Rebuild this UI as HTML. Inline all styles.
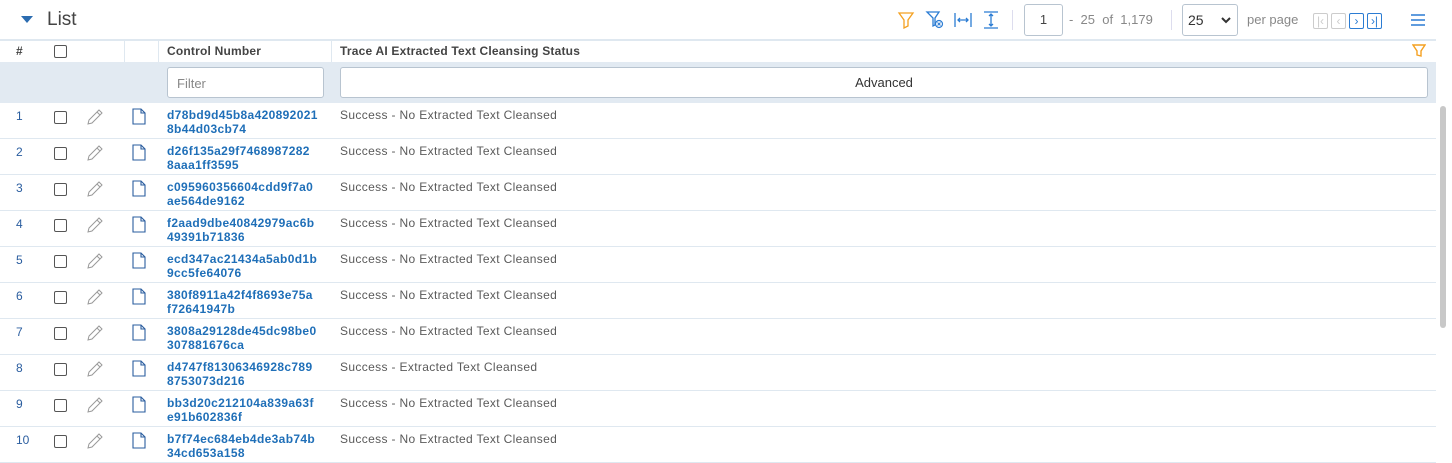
<!DOCTYPE html>
<html><head><meta charset="utf-8"><style>
*{box-sizing:border-box;margin:0;padding:0}
body{width:1452px;height:463px;overflow:hidden;background:#fff;font-family:"Liberation Sans",Arial,sans-serif;position:relative;color:#333}
.abs{position:absolute}
.top{height:41px;border-bottom:2px solid #dfe8f0;width:1436px}
.hdr{top:41px;height:21px;width:1436px;font-size:12px;font-weight:bold;color:#444;letter-spacing:0.2px}
.filt{top:62px;height:41px;width:1436px;background:#e2eaf2}
.row{position:absolute;left:0;width:1436px;height:36px;border-bottom:1px solid #dfe8f0;font-size:12px}
.cb{position:absolute;width:13px;height:13px;border:1px solid #555;border-radius:2px;background:#fff}
.num{position:absolute;left:16px;top:6px;color:#2a5d9f}
.cn{position:absolute;left:167px;top:5px;color:#1f6fb8;font-weight:bold;line-height:14px;font-size:12px;letter-spacing:0.35px}
.st{position:absolute;left:340px;top:5px;color:#5a5a5a;letter-spacing:0.35px}
.vl{position:absolute;top:41px;height:21px;width:1px;background:#dfe8f0}
.pb{position:absolute;top:13px;width:15px;height:16px;border-radius:2px;font-size:12px;text-align:center;line-height:14px}
</style></head><body>
<div class="abs top" style="left:0;top:0">
 <div class="abs" style="left:21px;top:16px;width:0;height:0;border-left:6px solid transparent;border-right:6px solid transparent;border-top:7px solid #2b6cb0"></div>
 <div class="abs" style="left:47px;top:9px;font-size:19px;color:#444">List</div>
 <svg class="abs" style="left:897px;top:11px" width="18" height="18" viewBox="0 0 18 18"><path d="M2 2h14l-5 7v6l-4 2V9z" fill="none" stroke="#f4a020" stroke-width="1.3"/></svg>
 <svg class="abs" style="left:925px;top:10px" width="20" height="20" viewBox="0 0 20 20"><path d="M2 2h12l-4 6v7l-2 1V8z" fill="none" stroke="#2b7cd3" stroke-width="1.3"/><circle cx="14" cy="14" r="3.5" fill="none" stroke="#2b7cd3" stroke-width="1.2"/><path d="M12.5 12.5l3 3M15.5 12.5l-3 3" stroke="#2b7cd3"/></svg>
 <svg class="abs" style="left:953px;top:11px" width="20" height="18" viewBox="0 0 20 18"><path d="M2 2v14M18 2v14M5 9h10M7 7l-2 2 2 2M13 7l2 2-2 2" fill="none" stroke="#2b7cd3" stroke-width="1.3"/></svg>
 <svg class="abs" style="left:981px;top:10px" width="20" height="20" viewBox="0 0 20 20"><path d="M3 2h14M3 18h14M10 4v12M8 6l2-2 2 2M8 14l2 2 2-2" fill="none" stroke="#2b7cd3" stroke-width="1.3"/></svg>
 <div class="abs" style="left:1012px;top:10px;width:1px;height:20px;background:#dde"></div>
 <div class="abs" style="left:1024px;top:4px;width:39px;height:32px;border:1px solid #b8c4d0;border-radius:3px;font-size:13px;color:#444;text-align:center;line-height:30px">1</div>
 <div class="abs" style="left:1069px;top:12px;font-size:13px;color:#888">-&nbsp; 25&nbsp; of&nbsp; 1,179</div>
 <div class="abs" style="left:1171px;top:10px;width:1px;height:20px;background:#dde"></div>
 <div class="abs" style="left:1182px;top:4px;width:56px;height:32px;border:1px solid #b8c4d0;border-radius:3px;font-size:14px;color:#333;line-height:30px;padding-left:5px">25<svg style="position:absolute;right:6px;top:12px" width="10" height="7" viewBox="0 0 10 7"><path d="M1 1l4 4 4-4" fill="none" stroke="#333" stroke-width="2"/></svg></div>
 <div class="abs" style="left:1247px;top:12px;font-size:13px;color:#888">per page</div>
 <div class="pb" style="left:1313px;border:1px solid #ccc;color:#ccc">|‹</div>
 <div class="pb" style="left:1331px;border:1px solid #ccc;color:#ccc">‹</div>
 <div class="pb" style="left:1349px;border:1px solid #2b7cd3;color:#2b7cd3">›</div>
 <div class="pb" style="left:1367px;border:1px solid #2b7cd3;color:#2b7cd3">›|</div>
 <svg class="abs" style="left:1410px;top:13px" width="16" height="14" viewBox="0 0 16 14"><path d="M1 2h14M1 7h14M1 12h14" stroke="#2b7cd3" stroke-width="1.4"/></svg>
</div>
<div class="abs hdr" style="left:0">
 <div class="abs" style="left:16px;top:3px">#</div>
 <div class="cb" style="left:54px;top:4px"></div>
 <div class="abs" style="left:167px;top:3px">Control Number</div>
 <div class="abs" style="left:340px;top:3px">Trace AI Extracted Text Cleansing Status</div>
 <svg class="abs" style="left:1412px;top:3px" width="14" height="14" viewBox="0 0 14 14"><path d="M1 1h12l-4 6v5l-4-1V7z" fill="none" stroke="#f4a020" stroke-width="1.4"/></svg>
</div>
<div class="vl" style="left:124px"></div><div class="vl" style="left:158px"></div><div class="vl" style="left:331px"></div>
<div class="abs filt" style="left:0">
 <div class="abs" style="left:167px;top:5px;width:157px;height:31px;background:#fff;border:1px solid #b8c4d0;border-radius:3px;font-size:13px;color:#888;padding:8px 9px">Filter</div>
 <div class="abs" style="left:340px;top:5px;width:1088px;height:31px;background:#fff;border:1px solid #b8c4d0;border-radius:3px;font-size:13px;color:#333;text-align:center;line-height:29px">Advanced</div>
</div>
<div class="abs" style="left:1440px;top:106px;width:6px;height:222px;background:#c8c8c8;border-radius:3px"></div>
<div id="rows"></div>
<script>
var d=[["d78bd9d45b8a420892021","8b44d03cb74",0],["d26f135a29f7468987282","8aaa1ff3595",0],["c095960356604cdd9f7a0","ae564de9162",0],["f2aad9dbe40842979ac6b","49391b71836",0],["ecd347ac21434a5ab0d1b","9cc5fe64076",0],["380f8911a42f4f8693e75a","f72641947b",0],["3808a29128de45dc98be0","307881676ca",0],["d4747f81306346928c789","8753073d216",1],["bb3d20c212104a839a63f","e91b602836f",0],["b7f74ec684eb4de3ab74b","34cd653a158",0]];
var h="";
d.forEach(function(r,i){var y=103+i*36;
h+='<div class="row" style="top:'+y+'px"><div class="num">'+(i+1)+'</div><div class="cb" style="left:54px;top:8px"></div>'+
'<svg style="position:absolute;left:86px;top:5px" width="18" height="18" viewBox="0 0 18 18"><path d="M2 16l1-4 10-10 3 3-10 10z M11 4l3 3" fill="none" stroke="#999" stroke-width="1"/></svg>'+
'<svg style="position:absolute;left:132px;top:5px" width="14" height="17" viewBox="0 0 14 17"><path d="M1 1h8l4 4v11H1z M9 1v4h4" fill="none" stroke="#2a5d9f" stroke-width="1.1"/></svg>'+
'<div class="cn">'+r[0]+'<br>'+r[1]+'</div><div class="st">'+(r[2]?'Success - Extracted Text Cleansed':'Success - No Extracted Text Cleansed')+'</div></div>';});
document.getElementById("rows").innerHTML=h;
</script>
</body></html>
